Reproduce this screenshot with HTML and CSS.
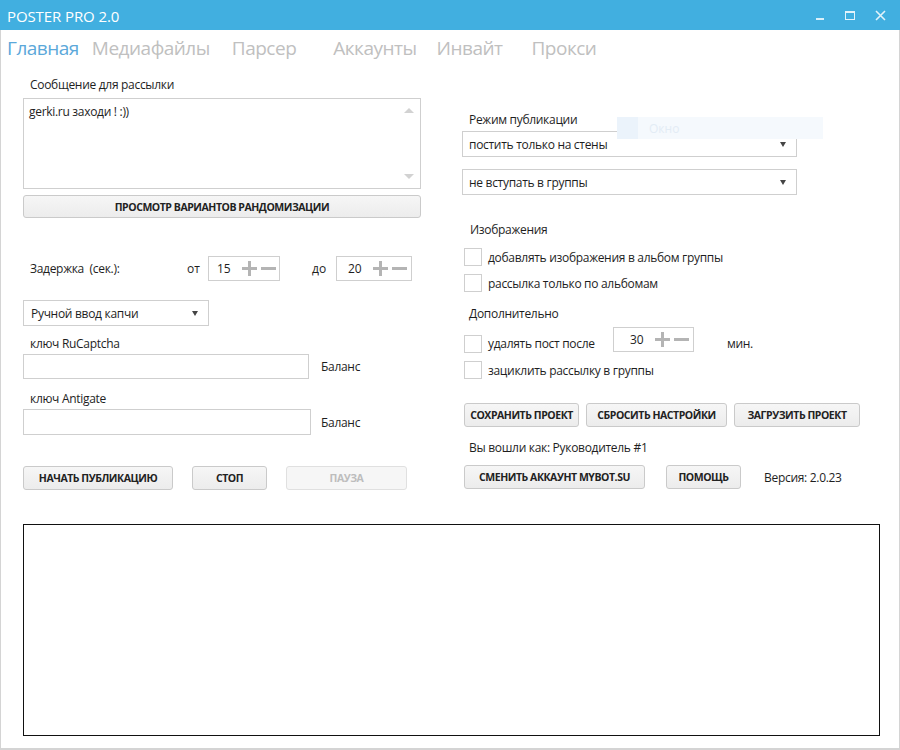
FILE: index.html
```html
<!DOCTYPE html>
<html lang="ru">
<head>
<meta charset="utf-8">
<title>POSTER PRO 2.0</title>
<link rel="stylesheet" href="styles.css">
</head>
<body>
<div class="window">
  <header class="titlebar">
    <span class="title">POSTER PRO 2.0</span>
    <div class="controls">
      <span class="ctl ctl-min"></span>
      <span class="ctl ctl-max"></span>
      <svg class="ctl-close" width="11" height="11" viewBox="0 0 11 11"><path d="M1 1L10 10M10 1L1 10" stroke="#fff" stroke-width="1.6" opacity="0.85"/></svg>
    </div>
  </header>
  <div class="body">
    <nav class="tabs">
      <span class="tab active">Главная</span>
      <span class="tab t2">Медиафайлы</span>
      <span class="tab t3">Парсер</span>
      <span class="tab t4">Аккаунты</span>
      <span class="tab t5">Инвайт</span>
      <span class="tab t6">Прокси</span>
    </nav>
    <div class="ghost"><span class="ghost-icon"></span><span class="ghost-text">Окно</span></div>
    <div class="columns">
      <section class="left">
        <div class="label l-msg">Сообщение для рассылки</div>
        <div class="textarea">
          <span>gerki.ru заходи ! :))</span>
          <span class="sb-up"></span>
          <span class="sb-down"></span>
        </div>
        <button class="btn wide">ПРОСМОТР ВАРИАНТОВ РАНДОМИЗАЦИИ</button>
        <div class="delay-row">
          <span class="delay-label">Задержка&nbsp; (сек.):</span>
          <span class="from">от</span>
          <div class="stepper s1"><span class="val">15</span><span class="plus"></span><span class="minus"></span></div>
          <span class="to">до</span>
          <div class="stepper s2"><span class="val">20</span><span class="plus"></span><span class="minus"></span></div>
        </div>
        <div class="select captcha"><span>Ручной ввод капчи</span><span class="arrow"></span></div>
        <div class="label l-key1">ключ RuCaptcha</div>
        <div class="key-row"><div class="input in1"></div><span class="balance">Баланс</span></div>
        <div class="label l-key2">ключ Antigate</div>
        <div class="key-row"><div class="input in2"></div><span class="balance bal2">Баланс</span></div>
        <div class="btn-row left-btns">
          <button class="btn b-start">НАЧАТЬ ПУБЛИКАЦИЮ</button>
          <button class="btn b-stop">СТОП</button>
          <button class="btn b-pause disabled">ПАУЗА</button>
        </div>
      </section>
      <section class="right">
        <div class="label l-mode">Режим публикации</div>
        <div class="select mode"><span>постить только на стены</span><span class="arrow"></span></div>
        <div class="select mode m2"><span>не вступать в группы</span><span class="arrow"></span></div>
        <div class="label l-img">Изображения</div>
        <div class="check-row c1"><span class="box"></span><span>добавлять изображения в альбом группы</span></div>
        <div class="check-row c2"><span class="box"></span><span>рассылка только по альбомам</span></div>
        <div class="label l-extra">Дополнительно</div>
        <div class="del-row">
          <span class="box"></span><span class="del-text">удалять пост после</span>
          <div class="stepper s3"><span class="val">30</span><span class="plus"></span><span class="minus"></span></div>
          <span class="min">мин.</span>
        </div>
        <div class="check-row c3"><span class="box"></span><span>зациклить рассылку в группы</span></div>
        <div class="btn-row r1">
          <button class="btn b-save">СОХРАНИТЬ ПРОЕКТ</button>
          <button class="btn b-reset">СБРОСИТЬ НАСТРОЙКИ</button>
          <button class="btn b-load">ЗАГРУЗИТЬ ПРОЕКТ</button>
        </div>
        <div class="label l-user">Вы вошли как: Руководитель #1</div>
        <div class="btn-row r2">
          <button class="btn b-acc">СМЕНИТЬ АККАУНТ MYBOT.SU</button>
          <button class="btn b-help">ПОМОЩЬ</button>
          <span class="version">Версия: 2.0.23</span>
        </div>
      </section>
    </div>
    <div class="log"></div>
  </div>
</div>
</body>
</html>
```

FILE: styles.css
```css
* { box-sizing: border-box; }
html, body { margin: 0; padding: 0; background: #fff; }
body {
  width: 900px; height: 750px; overflow: hidden;
  font-family: "Open Sans", "Noto Sans", sans-serif;
  color: #1e1e1e;
  font-size: 12px;
}
.window { width: 900px; height: 750px; display: flex; flex-direction: column; }
.titlebar {
  height: 30px; background: #41afe0; color: #fff;
  display: flex; align-items: center; justify-content: space-between;
  padding-left: 7px;
}
.title { font-size: 15px; letter-spacing: -0.1px; margin-top: 1px; }
.controls { display: flex; align-items: center; height: 30px; }
.ctl { display: block; }
.ctl-min { width: 8px; height: 2px; background: rgba(255,255,255,0.8); margin-top: 7px; margin-right: 21px; }
.ctl-max { width: 10px; height: 9px; border: 1px solid rgba(255,255,255,0.85); border-top-width: 2px; margin-right: 20px; margin-top: 1px; }
.ctl-close { margin-right: 14px; }

.body {
  flex: 1; position: relative;
  border-left: 1px solid #d4d4d4; border-right: 1px solid #d4d4d4; border-bottom: 2px solid #d4d4d4;
  padding: 0 20px 0 22px;
}
.tabs { display: flex; height: 36px; align-items: center; margin-left: -16px; padding-bottom: 1px; }
.tab { font-size: 19px; color: #c0c0c0; letter-spacing: -0.5px; white-space: nowrap; }
.tab.active { color: #5ba8da; }
.t2 { margin-left: 13px; }
.t3 { margin-left: 22px; }
.t4 { margin-left: 37px; }
.t5 { margin-left: 20px; }
.t6 { margin-left: 29px; }

.ghost {
  position: absolute; left: 616px; top: 87px; width: 206px; height: 22px;
  background: #f5f9fd; display: flex; align-items: center;
}
.ghost-icon { width: 21px; height: 22px; background: #ebf3fb; }
.ghost-text { color: #e3ecf5; font-size: 12px; margin-left: 11px; }

.columns { display: flex; gap: 41px; }
.left { width: 398px; display: flex; flex-direction: column; }
.right { width: 398px; display: flex; flex-direction: column; }

.label { line-height: 16px; white-space: nowrap; padding-left: 7px; letter-spacing: -0.3px; }
.l-msg { margin-top: 11px; }
.textarea {
  margin-top: 5px; height: 91px; border: 1px solid #cfcfcf;
  padding: 4px 5px; position: relative; letter-spacing: -0.3px;
}
.sb-up, .sb-down {
  position: absolute; right: 6px; width: 0; height: 0;
  border-left: 5px solid transparent; border-right: 5px solid transparent;
}
.sb-up { top: 9px; border-bottom: 5px solid #d2d2d2; }
.sb-down { bottom: 9px; border-top: 5px solid #d2d2d2; }

.btn {
  font-family: "Open Sans", "Noto Sans", sans-serif;
  font-weight: 700; font-size: 10.5px; color: #222;
  background: linear-gradient(#f6f6f6, #ececec);
  border: 1px solid #cacaca; border-radius: 3px;
  height: 24px; padding: 0; letter-spacing: -0.45px; white-space: nowrap;
}
.btn.disabled { color: #bdbdbd; background: #f6f6f6; border-color: #e0e0e0; }
.wide { margin-top: 6px; width: 398px; height: 23px; }

.delay-row { display: flex; align-items: center; margin-top: 38px; height: 25px; }
.delay-label { padding-left: 7px; width: 164px; letter-spacing: -0.3px; }
.from { width: 21px; }
.to { margin-left: 32px; width: 24px; }
.stepper {
  height: 25px; border: 1px solid #cfcfcf; display: flex; align-items: center;
  padding-left: 8px;
}
.s1 { width: 72px; }
.s2 { width: 76px; padding-left: 11px; }
.val { width: 25px; letter-spacing: -0.2px; }
.plus, .minus { position: relative; width: 15px; height: 15px; display: block; }
.plus { margin-right: 4px; }
.plus::before, .minus::before {
  content: ""; position: absolute; left: 0; top: 6px; width: 15px; height: 3px; background: #b4b4b4;
}
.plus::after {
  content: ""; position: absolute; left: 6px; top: 0; width: 3px; height: 15px; background: #b4b4b4;
}

.select {
  height: 26px; border: 1px solid #cfcfcf; display: flex; align-items: center;
  justify-content: space-between; padding: 0 10px 0 7px; letter-spacing: -0.3px;
}
.arrow {
  width: 0; height: 0; border-left: 3.5px solid transparent; border-right: 3.5px solid transparent;
  border-top: 5px solid #444;
}
.captcha { width: 186px; margin-top: 19px; }
.l-key1 { margin-top: 10px; }
.key-row { display: flex; align-items: center; margin-top: 2px; }
.input { height: 25px; border: 1px solid #cfcfcf; }
.in1 { width: 286px; }
.in2 { width: 288px; height: 26px; }
.balance { margin-left: 12px; letter-spacing: -0.3px; }
.bal2 { margin-left: 10px; }
.l-key2 { margin-top: 12px; }

.btn-row { display: flex; align-items: center; }
.left-btns { margin-top: 31px; }
.b-start { width: 150px; }
.b-stop { width: 75px; margin-left: 19px; }
.b-pause { width: 121px; margin-left: 19px; }

.l-mode { margin-top: 46px; }
.mode { width: 335px; margin-top: 3px; height: 26px; padding-left: 6px; }
.m2 { margin-top: 12px; }
.l-img { margin-top: 27px; padding-left: 8px !important; }
.check-row { display: flex; align-items: center; height: 18px; padding-left: 2px; letter-spacing: -0.3px; }
.box { width: 18px; height: 18px; border: 1px solid #cfcfcf; background: #fff; display: block; margin-right: 6px; flex: none; }
.c1 { margin-top: 10px; }
.c2 { margin-top: 8px; }
.l-extra { margin-top: 14px; }
.del-row { display: flex; align-items: flex-end; height: 26px; margin-top: 5px; padding-left: 2px; letter-spacing: -0.3px; }
.del-text { width: 125px; line-height: 18px; }
.s3 { width: 81px; padding-left: 16px; align-self: flex-start; }
.min { margin-left: 33px; line-height: 18px; }
.c3 { margin-top: 8px; }
.r1 { margin-top: 24px; padding-left: 2px; }
.b-save { width: 116px; }
.b-reset { width: 142px; margin-left: 7px; }
.b-load { width: 127px; margin-left: 7px; }
.l-user { margin-top: 13px; }
.r2 { margin-top: 9px; padding-left: 2px; }
.b-acc { width: 181px; }
.b-help { width: 75px; margin-left: 21px; }
.version { margin-left: 23px; letter-spacing: -0.3px; }

.log {
  margin-top: 34px; width: 857px; height: 212px; border: 1.5px solid #111;
}
```
